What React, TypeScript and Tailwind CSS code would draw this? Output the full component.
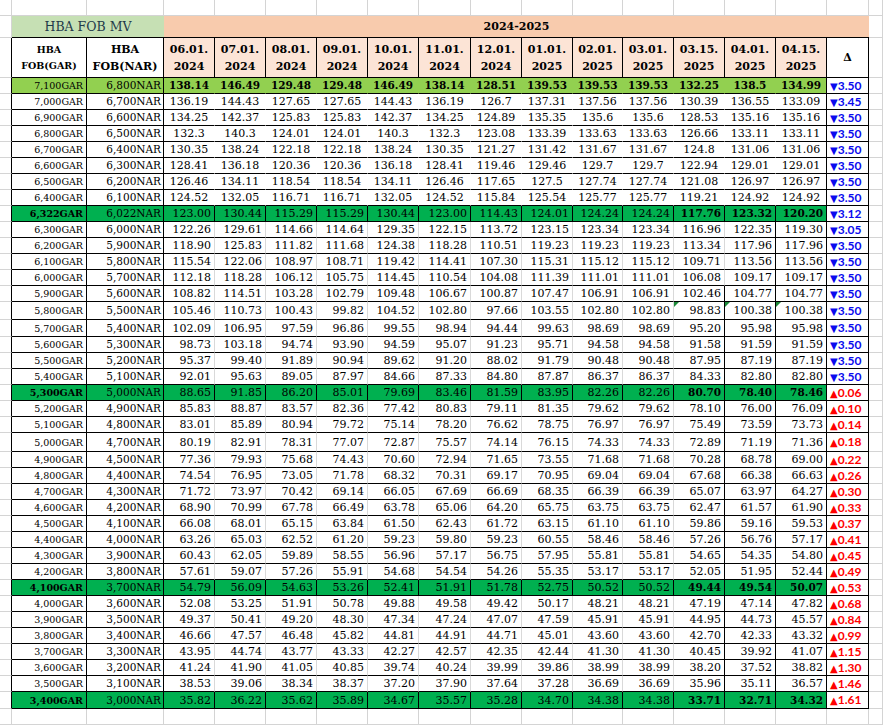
type Kind = 'lime' | 'upper' | 'mark' | 'lower'

const raw: [string, string, string, string][] = [
    ['7,100', '6,800', '138.14 146.49 129.48 129.48 146.49 138.14 128.51 139.53 139.53 139.53 132.25 138.5 134.99', '-3.50'],
    ['7,000', '6,700', '136.19 144.43 127.65 127.65 144.43 136.19 126.7 137.31 137.56 137.56 130.39 136.55 133.09', '-3.45'],
    ['6,900', '6,600', '134.25 142.37 125.83 125.83 142.37 134.25 124.89 135.35 135.6 135.6 128.53 135.16 135.16', '-3.50'],
    ['6,800', '6,500', '132.3 140.3 124.01 124.01 140.3 132.3 123.08 133.39 133.63 133.63 126.66 133.11 133.11', '-3.50'],
    ['6,700', '6,400', '130.35 138.24 122.18 122.18 138.24 130.35 121.27 131.42 131.67 131.67 124.8 131.06 131.06', '-3.50'],
    ['6,600', '6,300', '128.41 136.18 120.36 120.36 136.18 128.41 119.46 129.46 129.7 129.7 122.94 129.01 129.01', '-3.50'],
    ['6,500', '6,200', '126.46 134.11 118.54 118.54 134.11 126.46 117.65 127.5 127.74 127.74 121.08 126.97 126.97', '-3.50'],
    ['6,400', '6,100', '124.52 132.05 116.71 116.71 132.05 124.52 115.84 125.54 125.77 125.77 119.21 124.92 124.92', '-3.50'],
    ['6,322', '6,022', '123.00 130.44 115.29 115.29 130.44 123.00 114.43 124.01 124.24 124.24 117.76 123.32 120.20', '-3.12'],
    ['6,300', '6,000', '122.26 129.61 114.66 114.64 129.35 122.15 113.72 123.15 123.34 123.34 116.96 122.35 119.30', '-3.05'],
    ['6,200', '5,900', '118.90 125.83 111.82 111.68 124.38 118.28 110.51 119.23 119.23 119.23 113.34 117.96 117.96', '-3.50'],
    ['6,100', '5,800', '115.54 122.06 108.97 108.71 119.42 114.41 107.30 115.31 115.12 115.12 109.71 113.56 113.56', '-3.50'],
    ['6,000', '5,700', '112.18 118.28 106.12 105.75 114.45 110.54 104.08 111.39 111.01 111.01 106.08 109.17 109.17', '-3.50'],
    ['5,900', '5,600', '108.82 114.51 103.28 102.79 109.48 106.67 100.87 107.47 106.91 106.91 102.46 104.77 104.77', '-3.50'],
    ['5,800', '5,500', '105.46 110.73 100.43 99.82 104.52 102.80 97.66 103.55 102.80 102.80 98.83 100.38 100.38', '-3.50'],
    ['5,700', '5,400', '102.09 106.95 97.59 96.86 99.55 98.94 94.44 99.63 98.69 98.69 95.20 95.98 95.98', '-3.50'],
    ['5,600', '5,300', '98.73 103.18 94.74 93.90 94.59 95.07 91.23 95.71 94.58 94.58 91.58 91.59 91.59', '-3.50'],
    ['5,500', '5,200', '95.37 99.40 91.89 90.94 89.62 91.20 88.02 91.79 90.48 90.48 87.95 87.19 87.19', '-3.50'],
    ['5,400', '5,100', '92.01 95.63 89.05 87.97 84.66 87.33 84.80 87.87 86.37 86.37 84.33 82.80 82.80', '-3.50'],
    ['5,300', '5,000', '88.65 91.85 86.20 85.01 79.69 83.46 81.59 83.95 82.26 82.26 80.70 78.40 78.46', '+0.06'],
    ['5,200', '4,900', '85.83 88.87 83.57 82.36 77.42 80.83 79.11 81.35 79.62 79.62 78.10 76.00 76.09', '+0.10'],
    ['5,100', '4,800', '83.01 85.89 80.94 79.72 75.14 78.20 76.62 78.75 76.97 76.97 75.49 73.59 73.73', '+0.14'],
    ['5,000', '4,700', '80.19 82.91 78.31 77.07 72.87 75.57 74.14 76.15 74.33 74.33 72.89 71.19 71.36', '+0.18'],
    ['4,900', '4,500', '77.36 79.93 75.68 74.43 70.60 72.94 71.65 73.55 71.68 71.68 70.28 68.78 69.00', '+0.22'],
    ['4,800', '4,400', '74.54 76.95 73.05 71.78 68.32 70.31 69.17 70.95 69.04 69.04 67.68 66.38 66.63', '+0.26'],
    ['4,700', '4,300', '71.72 73.97 70.42 69.14 66.05 67.69 66.69 68.35 66.39 66.39 65.07 63.97 64.27', '+0.30'],
    ['4,600', '4,200', '68.90 70.99 67.78 66.49 63.78 65.06 64.20 65.75 63.75 63.75 62.47 61.57 61.90', '+0.33'],
    ['4,500', '4,100', '66.08 68.01 65.15 63.84 61.50 62.43 61.72 63.15 61.10 61.10 59.86 59.16 59.53', '+0.37'],
    ['4,400', '4,000', '63.26 65.03 62.52 61.20 59.23 59.80 59.23 60.55 58.46 58.46 57.26 56.76 57.17', '+0.41'],
    ['4,300', '3,900', '60.43 62.05 59.89 58.55 56.96 57.17 56.75 57.95 55.81 55.81 54.65 54.35 54.80', '+0.45'],
    ['4,200', '3,800', '57.61 59.07 57.26 55.91 54.68 54.54 54.26 55.35 53.17 53.17 52.05 51.95 52.44', '+0.49'],
    ['4,100', '3,700', '54.79 56.09 54.63 53.26 52.41 51.91 51.78 52.75 50.52 50.52 49.44 49.54 50.07', '+0.53'],
    ['4,000', '3,600', '52.08 53.25 51.91 50.78 49.88 49.58 49.42 50.17 48.21 48.21 47.19 47.14 47.82', '+0.68'],
    ['3,900', '3,500', '49.37 50.41 49.20 48.30 47.34 47.24 47.07 47.59 45.91 45.91 44.95 44.73 45.57', '+0.84'],
    ['3,800', '3,400', '46.66 47.57 46.48 45.82 44.81 44.91 44.71 45.01 43.60 43.60 42.70 42.33 43.32', '+0.99'],
    ['3,700', '3,300', '43.95 44.74 43.77 43.33 42.27 42.57 42.35 42.44 41.30 41.30 40.45 39.92 41.07', '+1.15'],
    ['3,600', '3,200', '41.24 41.90 41.05 40.85 39.74 40.24 39.99 39.86 38.99 38.99 38.20 37.52 38.82', '+1.30'],
    ['3,500', '3,100', '38.53 39.06 38.34 38.37 37.20 37.90 37.64 37.28 36.69 36.69 35.96 35.11 36.57', '+1.46'],
    ['3,400', '3,000', '35.82 36.22 35.62 35.89 34.67 35.57 35.28 34.70 34.38 34.38 33.71 32.71 34.32', '+1.61'],
]

const dates: [string, string][] = [
    ['06.01.', '2024'], ['07.01.', '2024'], ['08.01.', '2024'], ['09.01.', '2024'],
    ['10.01.', '2024'], ['11.01.', '2024'], ['12.01.', '2024'], ['01.01.', '2025'],
    ['02.01.', '2025'], ['03.01.', '2025'], ['03.15.', '2025'], ['04.01.', '2025'],
    ['04.15.', '2025'],
]

const marked = ['6,322', '5,300', '4,100', '3,400']

const widths = [12, 75, 77, 51, 51, 51, 51, 51, 52, 51, 51, 50, 51, 51, 51, 51, 42, 14]

const GRID = 'border-r border-b border-r-[#d4d4d4] border-b-[#d4d4d4]'

function rowKind(i: number, gar: string): Kind {
    if (i === 0) return 'lime'
    if (marked.includes(gar)) return 'mark'
    return i < 8 ? 'upper' : 'lower'
}

function rowHeight(gar: string) {
    if (gar === '5,800') return 'h-[18px]'
    if (gar === '5,000') return 'h-[19px]'
    if (gar === '5,700' || gar === '3,400') return 'h-[17px]'
    return 'h-[16px]'
}

function Triangle() {
    return (
        <span className="absolute top-0 left-0 w-0 h-0 border-t-[5px] border-r-[5px] border-t-[#1d8a3a] border-r-transparent" />
    )
}

function DataRow({ index, row }: { index: number, row: [string, string, string, string] }) {
    const [gar, nar, vals, delta] = row
    const kind = rowKind(index, gar)
    const values = vals.split(' ')
    const bg = kind === 'lime' ? 'bg-[#92d050]' : kind === 'mark' ? 'bg-[#00b050]' : 'bg-white'
    const down = delta.startsWith('-')

    return (
        <tr className={rowHeight(gar)}>
            <td className="border-r border-b border-r-black border-b-[#d4d4d4]" />
            <td
                className={`${bg} border-r border-b border-r-black border-b-black text-right pr-[3px] text-[9.5px] ${kind === 'mark' ? 'font-bold' : ''}`}
            >
                {gar}GAR
            </td>
            <td className={`${bg} border-r border-b border-r-black border-b-black text-right pr-[2px] text-[10.5px]`}>
                {nar}NAR
            </td>
            {values.map((v, c) => {
                let right = 'border-r-transparent'
                if (kind === 'mark' || c === 12) right = 'border-r-black'
                else if (kind === 'lower') {
                    if (c === 11 || (c === 10 && index >= 13)) right = 'border-r-black'
                    else right = 'border-r-[#d9d9d9]'
                }
                const bold = kind === 'lime' || (kind === 'mark' && c >= 10)
                const align = kind === 'lime' || kind === 'upper' ? 'text-center' : 'text-right pr-[3px]'
                return (
                    <td
                        key={c}
                        className={`${bg} ${right} ${align} relative border-r border-b border-b-black ${bold ? 'font-bold text-[10.5px]' : 'text-[11px]'}`}
                    >
                        {gar === '5,800' && c >= 10 && <Triangle />}
                        {v}
                    </td>
                )
            })}
            <td
                className={`bg-white border-r border-b border-r-black border-b-black pl-[3px] font-['Lato','DejaVu_Sans',sans-serif] font-bold text-[12px] leading-[14px] ${down ? 'text-[#0a0aee]' : 'text-[#ff0000]'}`}
            >
                <span className="text-[10px] leading-none">{down ? '▼' : '▲'}</span>{delta.slice(1)}
            </td>
            <td className={GRID} />
        </tr>
    )
}

function App() {
    return (
        <div className="w-[883px] h-[728px] overflow-hidden bg-white">
            <table className="table-fixed w-[883px] border-separate border-spacing-0 font-['DejaVu_Serif',serif] text-black leading-[15px] whitespace-nowrap">
                <colgroup>
                    {widths.map((w, i) => (
                        <col key={i} style={{ width: w }} />
                    ))}
                </colgroup>
                <tbody>
                    <tr className="h-[16px]">
                        {widths.map((_, i) => (
                            <td key={i} className={GRID} />
                        ))}
                    </tr>
                    <tr className="h-[22px]">
                        <td className={GRID} />
                        <td
                            colSpan={2}
                            className="bg-[#c6e0b4] border-b border-b-black text-center text-[12.5px] text-[#1f3a4a]"
                        >
                            HBA FOB MV
                        </td>
                        <td
                            colSpan={14}
                            className="bg-[#f8cbad] border-b border-b-black text-center font-bold text-[11px]"
                        >
                            2024-2025
                        </td>
                        <td className={GRID} />
                    </tr>
                    <tr className="h-[40px]">
                        <td className="border-r border-b border-r-black border-b-[#d4d4d4]" />
                        <td className="bg-white border-r border-b border-r-black border-b-black text-center font-bold text-[9.5px] leading-[16px]">
                            HBA<br />FOB(GAR)
                        </td>
                        <td className="bg-white border-r border-b border-r-black border-b-black text-center font-bold text-[11px] leading-[17px]">
                            HBA<br />FOB(NAR)
                        </td>
                        {dates.map(([d, y]) => (
                            <td
                                key={d}
                                className="bg-[#fce4d6] border-r border-b border-r-black border-b-black text-center font-bold text-[11px] leading-[17px]"
                            >
                                {d}<br />{y}
                            </td>
                        ))}
                        <td className="bg-white border-r border-b border-r-black border-b-black text-center font-bold text-[11px]">
                            Δ
                        </td>
                        <td className={GRID} />
                    </tr>
                    {raw.map((row, i) => (
                        <DataRow key={row[0]} index={i} row={row} />
                    ))}
                    <tr className="h-[16px]">
                        {widths.map((_, i) => (
                            <td key={i} className={GRID} />
                        ))}
                    </tr>
                </tbody>
            </table>
        </div>
    )
}

export default App
